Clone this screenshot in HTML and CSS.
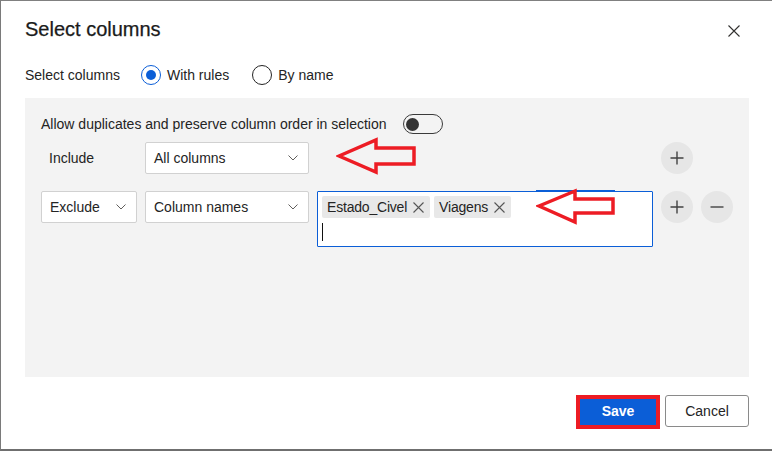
FILE: index.html
```html
<!DOCTYPE html>
<html lang="en">
<head>
<meta charset="utf-8">
<title>Select columns</title>
<link rel="stylesheet" href="styles.css">
</head>
<body>
<div class="dialog">
  <header class="head">
    <h1 class="title">Select columns</h1>
    <button class="close" aria-label="Close">
      <svg width="12" height="12" viewBox="0 0 12 12"><path d="M0.5 0.5 L11.5 11.5 M11.5 0.5 L0.5 11.5" stroke="#323130" stroke-width="1.1" fill="none"/></svg>
    </button>
  </header>

  <div class="mode">
    <span class="mode-label">Select columns</span>
    <label class="radio"><span class="ring on"><span class="dot"></span></span>With rules</label>
    <label class="radio"><span class="ring"></span>By name</label>
  </div>

  <section class="panel">
    <div class="allow">
      <span>Allow duplicates and preserve column order in selection</span>
      <span class="toggle"><span class="knob"></span></span>
    </div>

    <div class="rule">
      <span class="rule-label">Include</span>
      <div class="select">All columns<svg class="chev" width="10" height="6" viewBox="0 0 10 6"><path d="M0.5 0.5 L5 5 L9.5 0.5" stroke="#605e5c" stroke-width="1" fill="none"/></svg></div>
      <span class="empty"></span>
      <button class="round" aria-label="Add"><svg width="16" height="16" viewBox="0 0 16 16"><path d="M8 1.5 V14.5 M1.5 8 H14.5" stroke="#424242" stroke-width="1.4" fill="none"/></svg></button>
    </div>

    <div class="rule second">
      <div class="select">Exclude<svg class="chev" width="10" height="6" viewBox="0 0 10 6"><path d="M0.5 0.5 L5 5 L9.5 0.5" stroke="#605e5c" stroke-width="1" fill="none"/></svg></div>
      <div class="select">Column names<svg class="chev" width="10" height="6" viewBox="0 0 10 6"><path d="M0.5 0.5 L5 5 L9.5 0.5" stroke="#605e5c" stroke-width="1" fill="none"/></svg></div>
      <div class="tags">
        <div class="tag-line">
          <span class="tag">Estado_Civel<svg width="11" height="11" viewBox="0 0 11 11"><path d="M0.5 0.5 L10.5 10.5 M10.5 0.5 L0.5 10.5" stroke="#555" stroke-width="1.1" fill="none"/></svg></span>
          <span class="tag">Viagens<svg width="11" height="11" viewBox="0 0 11 11"><path d="M0.5 0.5 L10.5 10.5 M10.5 0.5 L0.5 10.5" stroke="#555" stroke-width="1.1" fill="none"/></svg></span>
        </div>
        <span class="caret"></span>
      </div>
      <button class="round" aria-label="Add"><svg width="16" height="16" viewBox="0 0 16 16"><path d="M8 1.5 V14.5 M1.5 8 H14.5" stroke="#424242" stroke-width="1.4" fill="none"/></svg></button>
      <button class="round" aria-label="Remove"><svg width="16" height="16" viewBox="0 0 16 16"><path d="M1.5 8 H14.5" stroke="#424242" stroke-width="1.4" fill="none"/></svg></button>
    </div>
  </section>

  <footer class="foot">
    <span class="save-wrap"><button class="btn save">Save</button><span class="mark"></span></span>
    <button class="btn cancel">Cancel</button>
  </footer>

  <svg class="arrow a1" width="82" height="40" viewBox="0 0 82 40"><polygon points="3,19 40,3 40,11 78,11 78,27 40,27 40,35" fill="none" stroke="#ed1c24" stroke-width="3.5" stroke-linejoin="miter"/></svg>
  <svg class="arrow a2" width="82" height="40" viewBox="0 0 82 40"><rect x="0" y="2" width="79" height="1.5" fill="#0b5ed7"/><polygon points="3,18 39,3 39,11 77,11 77,25 39,25 39,34" fill="none" stroke="#ed1c24" stroke-width="3.5" stroke-linejoin="miter"/></svg>
</div>
</body>
</html>
```

FILE: styles.css
```css
* { box-sizing: border-box; }
html, body { margin: 0; padding: 0; background: #fff; }
body {
  font-family: "Liberation Sans", Arial, sans-serif;
  font-size: 14px;
  color: #242424;
}
button { font-family: inherit; }

.dialog {
  position: relative;
  width: 772px;
  height: 451px;
  border-top: 1px solid #808080;
  border-left: 1px solid #7a7a7a;
  border-bottom: 2px solid #6f6f6f;
  padding: 0 23px 0 24px;
  overflow: hidden;
}

.head {
  display: flex;
  align-items: center;
  justify-content: space-between;
  padding-top: 14px;
  height: 42px;
}
.title {
  margin: 0;
  font-size: 20px;
  font-weight: 400;
  line-height: 28px;
  color: #1b1b1b;
  -webkit-text-stroke: 0.25px #1b1b1b;
}
.close {
  border: 0;
  background: none;
  padding: 0;
  width: 12px;
  height: 12px;
  margin-right: 9px;
  margin-top: 3px;
  display: flex;
}

.mode {
  display: flex;
  align-items: center;
  height: 20px;
  margin-top: 22px;
  line-height: 20px;
}
.mode-label { margin-right: 21px; }
.radio {
  display: flex;
  align-items: center;
  gap: 6px;
  margin-right: 23px;
}
.ring {
  width: 20px;
  height: 20px;
  border-radius: 50%;
  border: 1px solid #242424;
  display: flex;
  align-items: center;
  justify-content: center;
}
.ring.on { border: 1.5px solid #0b5ed7; }
.dot {
  width: 10px;
  height: 10px;
  border-radius: 50%;
  background: #0b5ed7;
}

.panel {
  margin-top: 13px;
  height: 279px;
  background: #f3f3f3;
  padding: 16px 16px 0 16px;
}
.allow {
  display: flex;
  align-items: center;
  gap: 16px;
  height: 20px;
}
.toggle {
  width: 40px;
  height: 20px;
  border: 1px solid #3a3a3a;
  border-radius: 10px;
  display: flex;
  align-items: center;
  padding-left: 2px;
}
.knob {
  width: 13px;
  height: 13px;
  border-radius: 50%;
  background: #333;
}

.rule {
  display: grid;
  grid-template-columns: 96px 164px 336px 32px 32px;
  column-gap: 8px;
  align-items: start;
  margin-top: 8px;
}
.rule.second { margin-top: 17px; }
.rule-label {
  height: 32px;
  line-height: 32px;
  padding-left: 8px;
}
.select {
  height: 32px;
  background: #fff;
  border: 1px solid #d1d1d1;
  border-radius: 2px;
  display: flex;
  align-items: center;
  justify-content: space-between;
  padding: 0 10px 0 8px;
}
.chev { display: block; }

.tags {
  height: 56px;
  background: #fff;
  border: 1px solid #0b5ed7;
  border-radius: 1px;
  padding: 4px 4px 0 4px;
}
.tag-line { display: flex; gap: 4px; }
.tag {
  height: 22px;
  background: #e8e8e8;
  border-radius: 2px;
  display: inline-flex;
  align-items: center;
  gap: 6px;
  padding: 0 6px 0 5px;
  letter-spacing: -0.2px;
}
.caret {
  display: block;
  width: 1px;
  height: 18px;
  background: #111;
  margin-top: 5px;
}

.round {
  width: 32px;
  height: 32px;
  border: 0;
  border-radius: 50%;
  background: #e6e6e6;
  padding: 0;
  display: flex;
  align-items: center;
  justify-content: center;
}

.foot {
  display: flex;
  justify-content: flex-end;
  gap: 5px;
  margin-top: 18px;
}
.save-wrap { position: relative; display: flex; }
.btn {
  height: 32px;
  width: 84px;
  border-radius: 3px;
  font-size: 14px;
}
.save {
  background: #0b5ed7;
  color: #fff;
  border: 0;
  font-weight: 700;
}
.cancel {
  background: #fff;
  color: #242424;
  border: 1px solid #8a8a8a;
}
.mark {
  position: absolute;
  left: 0;
  top: 0;
  right: 0;
  bottom: -2px;
  border: 4px solid #ed1c24;
}

.arrow { position: absolute; }
.a1 { left: 335px; top: 136px; }
.a2 { left: 535px; top: 187px; }
```
